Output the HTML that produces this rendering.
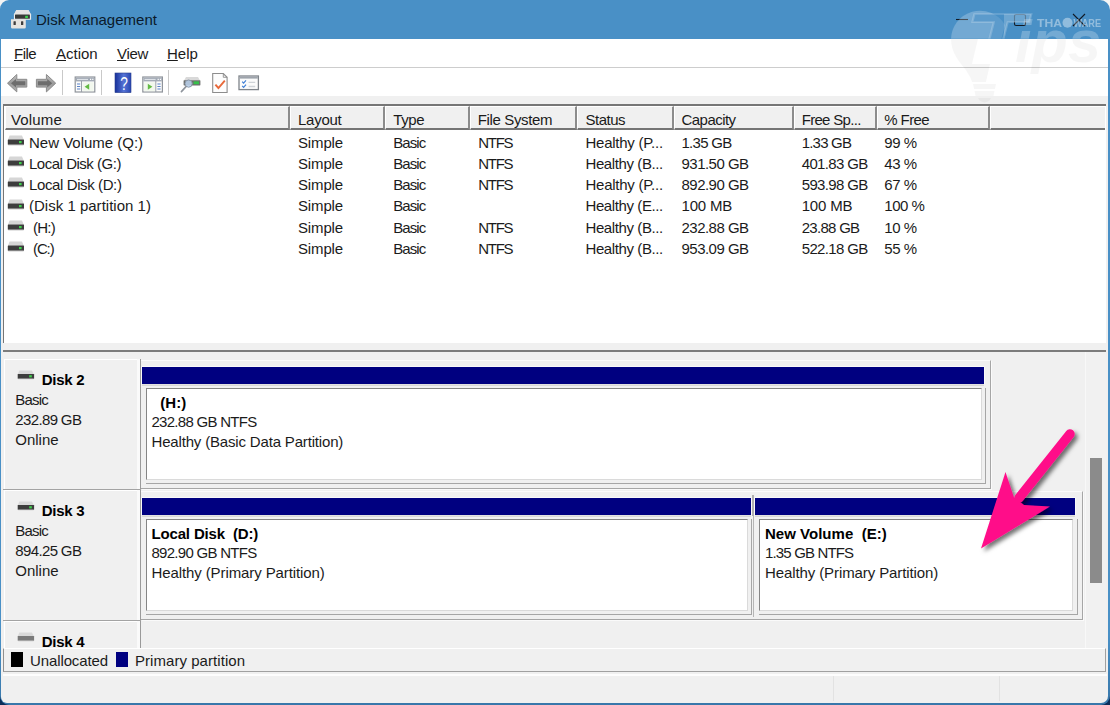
<!DOCTYPE html>
<html><head><meta charset="utf-8"><title>Disk Management</title>
<style>
*{box-sizing:border-box;margin:0;padding:0}
html,body{width:1110px;height:705px;overflow:hidden;background:linear-gradient(#f4f4f4 0,#f4f4f4 60%,#0c2d59 60%,#0c2d59 100%)}
body{background:none;font-family:"Liberation Sans",sans-serif;color:#1b1b1b;position:relative;font-size:15px}
.a{position:absolute}
.t{position:absolute;white-space:nowrap;line-height:21px;height:21px}
.n{letter-spacing:-0.55px}
.b{font-weight:bold;color:#000}
#corners{position:absolute;left:0;top:0;width:1110px;height:705px}
#win{position:absolute;left:0;top:0;width:1110px;height:705px;background:linear-gradient(#4990c6 0,#4990c6 90%,#3877aa 100%);border-radius:9px 10px 9px 9px;overflow:hidden}
#menubar{left:1.3px;top:39px;width:1106.4px;height:28px;background:#fff}
#menubar span{position:absolute;top:4px;white-space:nowrap;line-height:21px}
#menubar u{text-decoration-thickness:1px;text-underline-offset:1px}
#toolbar{left:1.3px;top:67px;width:1106.4px;height:29px;background:#fff;border-top:1px solid #cdcdcd}
.tsep{position:absolute;top:70px;width:1px;height:25px;background:#c9c9c9}
#body{left:1.3px;top:96px;width:1106.4px;height:606.6px;background:#f0f0f0;border-radius:0 0 7px 6px}
.hd{position:absolute;top:106px;height:24px;background:#f0f0f0;border-top:1px solid #fff;border-left:1px solid #fff;border-right:2px solid #8c8c8c;border-bottom:2px solid #757575;padding:2px 0 0 6px;white-space:nowrap;overflow:hidden;line-height:21px}
.navy{position:absolute;background:#000080;height:18px}
.frame{position:absolute;border:1px solid #a6a6a6;box-shadow:inset 1px 1px 0 #fff, 1px 1px 0 #fff}
.part{position:absolute;background:#fff;border-top:2px solid #8e8e8e;border-left:2px solid #8e8e8e;border-right:1px solid #c8c8c8;border-bottom:1px solid #c8c8c8;box-shadow:1px 1px 0 #a9a9a9}
</style></head><body>
<div id="win">
<!-- title bar -->
<svg class="a" style="left:9px;top:8px" width="24" height="23" viewBox="9 8 24 23">
 <path d="M16.400 9.900h12l2.700 4.700v5.200h-17.200v-5.200z" fill="#ededed"/>
 <path d="M16.400 9.900h12l2.500 4.600h-17z" fill="#e4e4e4"/>
 <rect x="15" y="14.500" width="14.900" height="4.300" rx=".5" fill="#383a38"/>
 <rect x="25.200" y="15.800" width="2.700" height="2.300" fill="#38d24e"/>
 <path d="M11 19.300h14.800v8a1.300 1.300 0 0 1-1.300 1.300H12.300a1.300 1.300 0 0 1-1.300-1.300z" fill="#e6e4e0"/>
 <rect x="13.500" y="21.300" width="2.300" height="3.800" rx=".5" fill="#3e3e3e"/>
 <rect x="21" y="21.300" width="2.300" height="3.800" rx=".5" fill="#3e3e3e"/>
</svg>
<div class="t" style="left:36px;top:9px;color:#0b1a2b">Disk Management</div>
<svg class="a" style="left:940px;top:0" width="170" height="39" viewBox="940 0 170 39" fill="none" stroke="#111a26" stroke-width="1.1">
 <path d="M956 19.5h12"/>
 <rect x="1014.5" y="14.5" width="11" height="11" rx="1.6"/>
 <path d="M1073 14l12 12M1085 14l-12 12"/>
</svg>
<!-- menu -->
<div id="menubar" class="a"><span style="left:12.700px;letter-spacing:-.5px"><u>F</u>ile</span><span style="left:54.700px"><u>A</u>ction</span><span style="left:115.700px;letter-spacing:-.3px"><u>V</u>iew</span><span style="left:165.700px"><u>H</u>elp</span></div>
<!-- toolbar -->
<div id="toolbar" class="a"></div>
<div class="tsep" style="left:62px"></div><div class="tsep" style="left:101px"></div><div class="tsep" style="left:168px"></div>
<svg class="a" style="left:0;top:68px" width="270" height="29" viewBox="0 68 270 29">
 <defs>
  <linearGradient id="ga" x1="0" y1="0" x2="0" y2="1"><stop offset="0" stop-color="#c4c4c4"/><stop offset=".5" stop-color="#9a9a9a"/><stop offset="1" stop-color="#b4b4b4"/></linearGradient>
  <linearGradient id="gh" x1="0" y1="0" x2="1" y2="0"><stop offset="0" stop-color="#16309a"/><stop offset=".55" stop-color="#5674d6"/><stop offset="1" stop-color="#2846b0"/></linearGradient>
 </defs>
 <!-- back / forward -->
 <path d="M7.500 83.200 16.800 74.500v4.800h10v7.800h-10v4.800z" fill="url(#ga)" stroke="#8a8a8a" stroke-width="1" stroke-linejoin="round"/>
 <path d="M11 83.200l5-4.300v2.300h9.200v4h-9.200v2.300z" fill="#5e5e5e" opacity=".75"/>
 <path d="M55.700 83.200 46.400 74.500v4.800h-10v7.800h10v4.800z" fill="url(#ga)" stroke="#8a8a8a" stroke-width="1" stroke-linejoin="round"/>
 <path d="M52.200 83.200l-5-4.300v2.300h-9.200v4h9.200v2.300z" fill="#5e5e5e" opacity=".75"/>
 <!-- show/hide console tree -->
 <rect x="75.2" y="77" width="19.6" height="15" fill="#fbfbfb" stroke="#8f949b" stroke-width="1.2"/>
 <rect x="75.800" y="77.600" width="18.400" height="3.800" fill="#a3abb6"/><path d="M77 79.400h11" stroke="#e6e9ee" stroke-width="1"/><path d="M90 79.400h1.200M92.200 79.400h1.200" stroke="#fff" stroke-width="1.200"/>
 <path d="M81.5 81v11" stroke="#9aa0a8" stroke-width="1"/>
 <path d="M77 84h3.2M77 86.5h3.2M77 89h3.2" stroke="#5b84c9" stroke-width="1.1"/>
 <rect x="82.600" y="82.200" width="11" height="9" fill="#f2f8ee"/><path d="M89.200 83.800v6l-4.600-3z" fill="#63bb45"/>
 <!-- help -->
 <rect x="115" y="73" width="16" height="19.600" fill="url(#gh)" stroke="#2a3f8c" stroke-width=".6"/>
 <text x="124" y="89.700" font-family="Liberation Sans, sans-serif" font-size="18.500" fill="#fff" text-anchor="middle" textLength="7.600" lengthAdjust="spacingAndGlyphs">?</text>
 <!-- action pane -->
 <rect x="142.8" y="77" width="19.6" height="15" fill="#fbfbfb" stroke="#8f949b" stroke-width="1.2"/>
 <rect x="143.400" y="77.600" width="18.400" height="3.800" fill="#a3abb6"/><path d="M144.600 79.400h11" stroke="#e6e9ee" stroke-width="1"/><path d="M157.600 79.400h1.200M159.800 79.400h1.200" stroke="#fff" stroke-width="1.200"/>
 <path d="M155.8 81v11" stroke="#9aa0a8" stroke-width="1"/>
 <path d="M157.4 84h3.2M157.4 86.5h3.2M157.4 89h3.2" stroke="#5b84c9" stroke-width="1.1"/>
 <rect x="144" y="82.200" width="11" height="9" fill="#f2f8ee"/><path d="M147.800 83.800v6l4.600-3z" fill="#63bb45"/>
 <!-- rescan (magnifier + disk) -->
 <path d="M186 77h12l2 3.4h-16z" fill="#d9d9d9"/>
 <rect x="183.6" y="80.2" width="16.8" height="5.2" rx=".6" fill="#6d6f6d"/>
 <rect x="193.6" y="81.4" width="5.4" height="2.8" fill="#35c04a"/>
 <circle cx="188.6" cy="83.6" r="3.6" fill="#bcd3ee" fill-opacity=".85" stroke="#8a97a8" stroke-width="1"/>
 <path d="M186 86.6l-4.6 5" stroke="#8e949c" stroke-width="1.6" stroke-linecap="round"/>
 <!-- properties doc w/ check -->
 <path d="M212.7 73.5h10.6l3.8 3.8v15.2h-14.4z" fill="#fdfdfd" stroke="#8d8d8d" stroke-width="1.1"/>
 <path d="M223.3 73.5v3.8h3.8" fill="none" stroke="#8d8d8d" stroke-width=".9"/>
 <path d="M215.4 84.6l3 3.4 6.4-7.4" fill="none" stroke="#e8693a" stroke-width="1.9"/>
 <!-- settings list -->
 <rect x="239" y="76" width="19.4" height="13.6" fill="#fbfbfb" stroke="#7f848a" stroke-width="1.3"/>
 <rect x="239.6" y="76.6" width="18.2" height="2" fill="#9ea4ac"/>
 <path d="M242.2 81.6l1.4 1.6 2.4-2.8M242.2 85.8l1.4 1.6 2.4-2.8" fill="none" stroke="#3f7fd6" stroke-width="1.2"/>
 <path d="M248.6 82.3h6.6M248.6 86.5h6.6" stroke="#cfd3d8" stroke-width="1.3"/>
</svg>
<div id="body" class="a"></div>
<!-- list view -->
<div class="a" style="left:3px;top:104px;width:1103px;height:239px;background:#fff;border-top:2px solid #767676;border-left:1.500px solid #767676"></div>
<div class="hd" style="left:5px;width:285px;padding-left:5.0px;letter-spacing:0.16px">Volume</div>
<div class="hd" style="left:290px;width:95px;padding-left:7.0px;letter-spacing:-0.26px">Layout</div>
<div class="hd" style="left:385px;width:85px;padding-left:7.3px;letter-spacing:-0.38px">Type</div>
<div class="hd" style="left:470px;width:107px;padding-left:6.7px;letter-spacing:-0.35px">File System</div>
<div class="hd" style="left:577px;width:97px;padding-left:7.5px;letter-spacing:-0.51px">Status</div>
<div class="hd" style="left:674px;width:120px;padding-left:6.5px;letter-spacing:-0.54px">Capacity</div>
<div class="hd" style="left:794px;width:83px;padding-left:6.7px;letter-spacing:-0.69px">Free Sp...</div>
<div class="hd" style="left:877px;width:113px;padding-left:6.3px;letter-spacing:-0.61px">% Free</div>
<div class="hd" style="left:990px;width:115px;border-right:0"></div>
<svg class="a" style="left:7px;top:134.9px" width="18" height="12" viewBox="0 0 18 12"><path d="M2.600 .6h12.400l1.800 4.200H.9z" fill="#d6d6d6"/><rect x=".8" y="4.600" width="16.200" height="5.200" rx=".5" fill="#3d3d3d"/><rect x="12" y="6" width="2.600" height="2.200" fill="#3fd04c"/><rect x="1.200" y="9.800" width="15.400" height="1" fill="#dedede"/></svg>
<div class="t" style="left:29px;top:131.7px;letter-spacing:-0.01px">New Volume (Q:)</div>
<div class="t" style="left:298px;top:131.7px;letter-spacing:-0.14px">Simple</div>
<div class="t" style="left:393.3px;top:131.7px;letter-spacing:-0.94px">Basic</div>
<div class="t" style="left:478.3px;top:131.7px;letter-spacing:-1.29px">NTFS</div>
<div class="t" style="left:585.5px;top:131.7px;letter-spacing:-0.25px">Healthy (P...</div>
<div class="t" style="left:681.5px;top:131.7px;letter-spacing:-0.72px">1.35 GB</div>
<div class="t" style="left:801.7px;top:131.7px;letter-spacing:-0.79px">1.33 GB</div>
<div class="t" style="left:884.3px;top:131.7px;letter-spacing:-0.43px">99 %</div>
<svg class="a" style="left:7px;top:156.1px" width="18" height="12" viewBox="0 0 18 12"><path d="M2.600 .6h12.400l1.800 4.200H.9z" fill="#d6d6d6"/><rect x=".8" y="4.600" width="16.200" height="5.200" rx=".5" fill="#3d3d3d"/><rect x="12" y="6" width="2.600" height="2.200" fill="#3fd04c"/><rect x="1.200" y="9.800" width="15.400" height="1" fill="#dedede"/></svg>
<div class="t" style="left:29px;top:152.9px;letter-spacing:-0.48px">Local Disk (G:)</div>
<div class="t" style="left:298px;top:152.9px;letter-spacing:-0.14px">Simple</div>
<div class="t" style="left:393.3px;top:152.9px;letter-spacing:-0.94px">Basic</div>
<div class="t" style="left:478.3px;top:152.9px;letter-spacing:-1.29px">NTFS</div>
<div class="t" style="left:585.5px;top:152.9px;letter-spacing:-0.4px">Healthy (B...</div>
<div class="t" style="left:681.5px;top:152.9px;letter-spacing:-0.52px">931.50 GB</div>
<div class="t" style="left:801.7px;top:152.9px;letter-spacing:-0.64px">401.83 GB</div>
<div class="t" style="left:884.3px;top:152.9px;letter-spacing:-0.43px">43 %</div>
<svg class="a" style="left:7px;top:177.4px" width="18" height="12" viewBox="0 0 18 12"><path d="M2.600 .6h12.400l1.800 4.200H.9z" fill="#d6d6d6"/><rect x=".8" y="4.600" width="16.200" height="5.200" rx=".5" fill="#3d3d3d"/><rect x="12" y="6" width="2.600" height="2.200" fill="#3fd04c"/><rect x="1.200" y="9.800" width="15.400" height="1" fill="#dedede"/></svg>
<div class="t" style="left:29px;top:174.2px;letter-spacing:-0.39px">Local Disk (D:)</div>
<div class="t" style="left:298px;top:174.2px;letter-spacing:-0.14px">Simple</div>
<div class="t" style="left:393.3px;top:174.2px;letter-spacing:-0.94px">Basic</div>
<div class="t" style="left:478.3px;top:174.2px;letter-spacing:-1.29px">NTFS</div>
<div class="t" style="left:585.5px;top:174.2px;letter-spacing:-0.25px">Healthy (P...</div>
<div class="t" style="left:681.5px;top:174.2px;letter-spacing:-0.52px">892.90 GB</div>
<div class="t" style="left:801.7px;top:174.2px;letter-spacing:-0.64px">593.98 GB</div>
<div class="t" style="left:884.3px;top:174.2px;letter-spacing:-0.43px">67 %</div>
<svg class="a" style="left:7px;top:198.6px" width="18" height="12" viewBox="0 0 18 12"><path d="M2.600 .6h12.400l1.800 4.200H.9z" fill="#d6d6d6"/><rect x=".8" y="4.600" width="16.200" height="5.200" rx=".5" fill="#3d3d3d"/><rect x="12" y="6" width="2.600" height="2.200" fill="#3fd04c"/><rect x="1.200" y="9.800" width="15.400" height="1" fill="#dedede"/></svg>
<div class="t" style="left:29px;top:195.4px;letter-spacing:0.01px">(Disk 1 partition 1)</div>
<div class="t" style="left:298px;top:195.4px;letter-spacing:-0.14px">Simple</div>
<div class="t" style="left:393.3px;top:195.4px;letter-spacing:-0.94px">Basic</div>
<div class="t" style="left:585.5px;top:195.4px;letter-spacing:-0.4px">Healthy (E...</div>
<div class="t" style="left:681.5px;top:195.4px;letter-spacing:-0.17px">100 MB</div>
<div class="t" style="left:801.7px;top:195.4px;letter-spacing:-0.17px">100 MB</div>
<div class="t" style="left:884.3px;top:195.4px;letter-spacing:-0.51px">100 %</div>
<svg class="a" style="left:7px;top:219.9px" width="18" height="12" viewBox="0 0 18 12"><path d="M2.600 .6h12.400l1.800 4.200H.9z" fill="#d6d6d6"/><rect x=".8" y="4.600" width="16.200" height="5.200" rx=".5" fill="#3d3d3d"/><rect x="12" y="6" width="2.600" height="2.200" fill="#3fd04c"/><rect x="1.200" y="9.800" width="15.400" height="1" fill="#dedede"/></svg>
<div class="t" style="left:33px;top:216.7px;letter-spacing:-0.75px">(H:)</div>
<div class="t" style="left:298px;top:216.7px;letter-spacing:-0.14px">Simple</div>
<div class="t" style="left:393.3px;top:216.7px;letter-spacing:-0.94px">Basic</div>
<div class="t" style="left:478.3px;top:216.7px;letter-spacing:-1.29px">NTFS</div>
<div class="t" style="left:585.5px;top:216.7px;letter-spacing:-0.4px">Healthy (B...</div>
<div class="t" style="left:681.5px;top:216.7px;letter-spacing:-0.52px">232.88 GB</div>
<div class="t" style="left:801.7px;top:216.7px;letter-spacing:-0.71px">23.88 GB</div>
<div class="t" style="left:884.3px;top:216.7px;letter-spacing:-0.43px">10 %</div>
<svg class="a" style="left:7px;top:241.1px" width="18" height="12" viewBox="0 0 18 12"><path d="M2.600 .6h12.400l1.800 4.200H.9z" fill="#d6d6d6"/><rect x=".8" y="4.600" width="16.200" height="5.200" rx=".5" fill="#3d3d3d"/><rect x="12" y="6" width="2.600" height="2.200" fill="#3fd04c"/><rect x="1.200" y="9.800" width="15.400" height="1" fill="#dedede"/></svg>
<div class="t" style="left:33px;top:237.9px;letter-spacing:-1.12px">(C:)</div>
<div class="t" style="left:298px;top:237.9px;letter-spacing:-0.14px">Simple</div>
<div class="t" style="left:393.3px;top:237.9px;letter-spacing:-0.94px">Basic</div>
<div class="t" style="left:478.3px;top:237.9px;letter-spacing:-1.29px">NTFS</div>
<div class="t" style="left:585.5px;top:237.9px;letter-spacing:-0.4px">Healthy (B...</div>
<div class="t" style="left:681.5px;top:237.9px;letter-spacing:-0.52px">953.09 GB</div>
<div class="t" style="left:801.7px;top:237.9px;letter-spacing:-0.64px">522.18 GB</div>
<div class="t" style="left:884.3px;top:237.9px;letter-spacing:-0.43px">55 %</div>
<!-- splitter + graphical view -->
<div class="a" style="left:3px;top:350px;width:1103px;height:2px;background:#7c7c7c"></div>
<div class="a" style="left:1085px;top:352px;width:21px;height:296px;background:#f1f1f1;border-left:1px solid #f8f8f8"></div>
<div class="a" style="left:1090px;top:458px;width:12px;height:125px;background:#8b8b8b"></div>
<div class="a" style="left:4px;top:359px;width:135px;height:1px;background:#fff"></div>
<div class="a" style="left:136.500px;top:359px;width:4.500px;height:130px;background:#fafafa;border-right:1px solid #9a9a9a"></div>
<div class="a" style="left:4px;top:359px;width:1px;height:130px;background:#fff"></div>
<svg class="a" style="left:17px;top:369.5px" width="18" height="11" viewBox="0 0 18 11"><path d="M2.4 .4h12.600l1.900 3.800H.7z" fill="#d9d9d9"/><rect x=".7" y="4" width="16.400" height="4.800" rx=".5" fill="#3d3d3d"/><rect x="12.200" y="5.200" width="2.600" height="2.200" fill="#3fd04c"/><rect x="1.200" y="8.800" width="15.400" height="1" fill="#e2e2e2"/></svg>
<div class="t b" style="left:41.700px;top:368.8px;letter-spacing:-0.28px">Disk 2</div>
<div class="t" style="left:15.300px;top:389.3px;letter-spacing:-0.8px">Basic</div>
<div class="t" style="left:15.300px;top:409.3px;letter-spacing:-0.64px">232.89 GB</div>
<div class="t" style="left:15.300px;top:429.3px;letter-spacing:-0.01px">Online</div>
<div class="a" style="left:141px;top:360px;width:850px;height:129px;border-right:1px solid #a6a6a6;border-bottom:1px solid #a6a6a6;border-top:1px solid #fbfbfb;box-shadow:1px 1px 0 #fafafa"></div>
<div class="navy" style="left:142.2px;top:366.5px;width:842.3px;height:17.300px;box-shadow:0 0 0 .6px #fff,0 1.400px 0 #b4b4b4"></div>
<div class="a" style="left:146px;top:388px;width:840.0px;height:96px;border-right:1px solid #a6a6a6;border-bottom:1px solid #a6a6a6"></div>
<div class="a" style="left:146px;top:388px;width:835.7px;height:91.500px;background:#fff;border-left:1.300px solid #858585;border-top:1.300px solid #858585;border-right:1px solid #dadada;border-bottom:1px solid #dadada"></div>
<div class="t b" style="left:160.3px;top:391.8px;letter-spacing:0.04px">(H:)</div>
<div class="t" style="left:151.5px;top:411.3px;letter-spacing:-0.72px">232.88 GB NTFS</div>
<div class="t" style="left:151.5px;top:431.2px;letter-spacing:-0.17px">Healthy (Basic Data Partition)</div>
<div class="a" style="left:3px;top:489px;width:138px;height:1px;background:#a3a3a3"></div>
<div class="a" style="left:4px;top:490px;width:135px;height:1px;background:#fff"></div>
<div class="a" style="left:136.500px;top:490px;width:4.500px;height:130px;background:#fafafa;border-right:1px solid #9a9a9a"></div>
<div class="a" style="left:4px;top:490px;width:1px;height:130px;background:#fff"></div>
<svg class="a" style="left:17px;top:500.5px" width="18" height="11" viewBox="0 0 18 11"><path d="M2.4 .4h12.600l1.900 3.800H.7z" fill="#d9d9d9"/><rect x=".7" y="4" width="16.400" height="4.800" rx=".5" fill="#3d3d3d"/><rect x="12.200" y="5.200" width="2.600" height="2.200" fill="#3fd04c"/><rect x="1.200" y="8.800" width="15.400" height="1" fill="#e2e2e2"/></svg>
<div class="t b" style="left:41.700px;top:499.8px;letter-spacing:-0.28px">Disk 3</div>
<div class="t" style="left:15.300px;top:520.3px;letter-spacing:-0.8px">Basic</div>
<div class="t" style="left:15.300px;top:540.3px;letter-spacing:-0.64px">894.25 GB</div>
<div class="t" style="left:15.300px;top:560.3px;letter-spacing:-0.01px">Online</div>
<div class="a" style="left:141px;top:491px;width:941.5px;height:129px;border-right:1px solid #a6a6a6;border-bottom:1px solid #a6a6a6;border-top:1px solid #fbfbfb;box-shadow:1px 1px 0 #fafafa"></div>
<div class="navy" style="left:142.2px;top:497.5px;width:608.8px;height:17.300px;box-shadow:0 0 0 .6px #fff,0 1.400px 0 #b4b4b4"></div>
<div class="a" style="left:146px;top:519px;width:606.0px;height:96px;border-right:1px solid #a6a6a6;border-bottom:1px solid #a6a6a6"></div>
<div class="a" style="left:146px;top:519px;width:601.7px;height:91.500px;background:#fff;border-left:1.300px solid #858585;border-top:1.300px solid #858585;border-right:1px solid #dadada;border-bottom:1px solid #dadada"></div>
<div class="t b" style="left:151.5px;top:522.8px;letter-spacing:-0.16px">Local Disk&nbsp; (D:)</div>
<div class="t" style="left:151.5px;top:542.3px;letter-spacing:-0.72px">892.90 GB NTFS</div>
<div class="t" style="left:151.5px;top:562.2px;letter-spacing:-0.1px">Healthy (Primary Partition)</div>
<div class="navy" style="left:755.2px;top:497.5px;width:320.3px;height:17.300px;box-shadow:0 0 0 .6px #fff,0 1.400px 0 #b4b4b4"></div>
<div class="a" style="left:759px;top:519px;width:318.7px;height:96px;border-right:1px solid #a6a6a6;border-bottom:1px solid #a6a6a6"></div>
<div class="a" style="left:759px;top:519px;width:314.4px;height:91.500px;background:#fff;border-left:1.300px solid #858585;border-top:1.300px solid #858585;border-right:1px solid #dadada;border-bottom:1px solid #dadada"></div>
<div class="t b" style="left:765px;top:522.8px;letter-spacing:0.02px">New Volume&nbsp; (E:)</div>
<div class="t" style="left:765px;top:542.3px;letter-spacing:-0.84px">1.35 GB NTFS</div>
<div class="t" style="left:765px;top:562.2px;letter-spacing:-0.1px">Healthy (Primary Partition)</div>
<div class="a" style="left:751.600px;top:495px;width:2.800px;height:21px;background:#b0b0b0"></div>
<div class="a" style="left:752.500px;top:516px;width:1.600px;height:101px;background:#b5b5b5"></div>
<div class="a" style="left:3px;top:620px;width:138px;height:1px;background:#a3a3a3"></div>
<div class="a" style="left:4px;top:621px;width:135px;height:1px;background:#fff"></div>
<div class="a" style="left:136.500px;top:621px;width:4.500px;height:27px;background:#fafafa;border-right:1px solid #9a9a9a"></div>
<div class="a" style="left:4px;top:621px;width:1px;height:27px;background:#fff"></div>
<svg class="a" style="left:17px;top:631.5px" width="18" height="11" viewBox="0 0 18 11"><path d="M2.4 .4h12.600l1.900 3.800H.7z" fill="#d9d9d9"/><rect x=".7" y="4" width="16.400" height="4.800" rx=".5" fill="#7a7a7a"/><rect x="1.200" y="8.800" width="15.400" height="1" fill="#e2e2e2"/></svg>
<div class="t b" style="left:41.700px;top:630.8px;letter-spacing:-0.28px">Disk 4</div>
<!-- legend -->
<div class="a" style="left:2.500px;top:648px;width:1103.500px;height:24px;background:#f0f0f0;border-top:1px solid #fff;border-left:1px solid #8f8f8f;border-right:1px solid #a0a0a0;border-bottom:1px solid #a0a0a0"></div>
<div class="a" style="left:10.700px;top:652.200px;width:12.800px;height:14.800px;background:#000"></div>
<div class="t" style="left:30px;top:650.300px;letter-spacing:-0.11px">Unallocated</div>
<div class="a" style="left:115.600px;top:652.200px;width:12.800px;height:14.800px;background:#000080"></div>
<div class="t" style="left:135px;top:650.300px;letter-spacing:0.05px">Primary partition</div>
<!-- status bar -->
<div class="a" style="left:3px;top:674px;width:1104px;height:1.500px;background:#fdfdfd"></div>
<div class="a" style="left:833px;top:676px;width:1px;height:25px;background:#e2e2e2"></div>
<div class="a" style="left:999px;top:676px;width:1px;height:25px;background:#e2e2e2"></div>
<!-- watermark -->
<svg class="a" style="left:930px;top:0" width="180" height="110" viewBox="930 0 180 110">
 <defs>
  <clipPath id="cT"><rect x="930" y="0" width="180" height="38.700"/></clipPath>
  <clipPath id="cB"><rect x="930" y="39" width="178" height="66"/></clipPath>
  <clipPath id="cR"><rect x="1004" y="0" width="60" height="38.700"/></clipPath>
 </defs>
 <g clip-path="url(#cT)" fill="#fff">
  <path d="M951 40a29 29 0 0 1 54-15l-4 15h-50z" opacity=".23"/>
  <text x="965.500" y="63.500" font-family="Liberation Sans, sans-serif" font-weight="bold" font-style="italic" font-size="72" textLength="59" lengthAdjust="spacingAndGlyphs" fill="#4990c6" fill-opacity=".55" stroke="#fff" stroke-opacity=".2" stroke-width="1.600">T</text>
  <g clip-path="url(#cR)"><text x="965.500" y="63.500" font-family="Liberation Sans, sans-serif" font-weight="bold" font-style="italic" font-size="72" textLength="59" lengthAdjust="spacingAndGlyphs" opacity=".2">T</text></g>
  <circle cx="1067.500" cy="22.700" r="5" opacity=".4"/>
  <text x="1037" y="27" font-family="Liberation Sans, sans-serif" font-weight="bold" font-size="11" textLength="25" lengthAdjust="spacingAndGlyphs" opacity=".4">THA</text>
  <text x="1073.500" y="27" font-family="Liberation Sans, sans-serif" font-weight="bold" font-size="11" textLength="27.500" lengthAdjust="spacingAndGlyphs" opacity=".4">WARE</text>
  <text x="1015" y="62" font-family="Liberation Sans, sans-serif" font-weight="bold" font-style="italic" font-size="60" textLength="86" lengthAdjust="spacingAndGlyphs" opacity=".24">ips</text>
 </g>
 <g clip-path="url(#cB)" fill="#000" opacity=".03">
  <path d="M951 39c0 14 8 22 14 30 4 6 6 9 7 13h14l4-18h-18l6-25z"/>
  <path d="M973 84h23l-1 5h-21zM974.500 91h20l-1 5h-18zM978 98h13a7 7 0 0 1-13 0z"/>
  <text x="1015" y="62" font-family="Liberation Sans, sans-serif" font-weight="bold" font-style="italic" font-size="60" textLength="86" lengthAdjust="spacingAndGlyphs">ips</text>
 </g>
</svg>
<!-- pink arrow -->
<svg class="a" style="left:940px;top:400px" width="170" height="180" viewBox="940 400 170 180">
 <defs><filter id="sh" x="-20%" y="-20%" width="150%" height="150%"><feDropShadow dx="3" dy="3" stdDeviation="2" flood-color="#000" flood-opacity=".55"/></filter></defs>
 <g filter="url(#sh)" fill="#ff1089" stroke="none">
  <path d="M1070 434L1019 498" stroke="#ff1089" stroke-width="9.500" stroke-linecap="round" fill="none"/>
  <path d="M981 548.500L1005.500 472l8.500 25.500 10 7.500 26 1.500z"/>
 </g>
</svg>
</div>
</body></html>
